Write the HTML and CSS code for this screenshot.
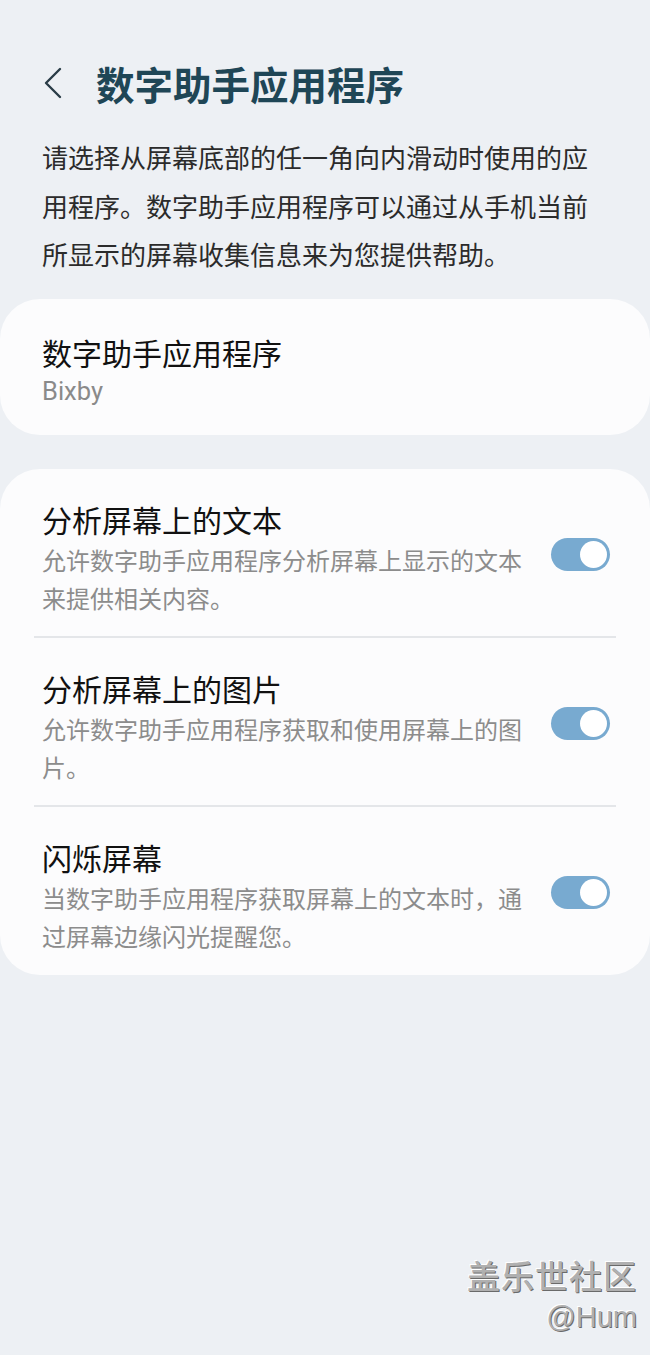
FILE: index.html
```html
<!DOCTYPE html>
<html lang="zh-CN">

<head>
    <meta charset="UTF-8">
    <meta name="viewport" content="width=device-width, initial-scale=1.0">
    <title>数字助手应用程序</title>
    <link rel="stylesheet" href="styles.css">
</head>

<body>

    <div class="header">
        <span class="back">
            <svg width="20" height="32" viewBox="0 0 20 32">
                <path d="M17 2 L3 16 L17 30" fill="none" stroke="#2a3d47" stroke-width="2.4" stroke-linecap="round" stroke-linejoin="round" />
            </svg>
        </span>
        <h1>数字助手应用程序</h1>
    </div>

    <p class="intro">请选择从屏幕底部的任一角向内滑动时使用的应用程序。数字助手应用程序可以通过从手机当前所显示的屏幕收集信息来为您提供帮助。</p>

    <div class="card single">
        <div class="itemTitle">数字助手应用程序</div>
        <div class="itemValue">Bixby</div>
    </div>

    <div class="card list">
        <div class="row">
            <div class="rowText">
                <div class="itemTitle">分析屏幕上的文本</div>
                <div class="itemDesc">允许数字助手应用程序分析屏幕上显示的文本来提供相关内容。</div>
            </div>
            <span class="toggle on"></span>
        </div>
        <div class="row">
            <div class="rowText">
                <div class="itemTitle">分析屏幕上的图片</div>
                <div class="itemDesc">允许数字助手应用程序获取和使用屏幕上的图片。</div>
            </div>
            <span class="toggle on"></span>
        </div>
        <div class="row">
            <div class="rowText">
                <div class="itemTitle">闪烁屏幕</div>
                <div class="itemDesc">当数字助手应用程序获取屏幕上的文本时，通过屏幕边缘闪光提醒您。</div>
            </div>
            <span class="toggle on"></span>
        </div>
    </div>

    <div class="watermark">
        <div class="wmName">盖乐世社区</div>
        <div class="wmUser">@Hum</div>
    </div>

</body>

</html>
```

FILE: styles.css
```css
body {
    margin: 0;
    min-height: 1355px;
    background-color: #edf0f4;
    font-family: "Noto Sans CJK SC", "Noto Sans", sans-serif;
    color: #111;
    position: relative;
}

.header {
    display: flex;
    align-items: center;
    padding: 59px 0 0 43px;
    height: 48px;
}

.back {
    display: flex;
    width: 53px;
}

h1 {
    margin: 0;
    font-size: 38.5px;
    line-height: 48px;
    font-weight: 700;
    color: #1f4656;
}

.intro {
    margin: 26px 0 0;
    padding: 0 42px;
    font-size: 26px;
    line-height: 48.5px;
    color: #2b2b2b;
}

.card {
    background-color: #fcfcfd;
    border-radius: 40px;
}

.single {
    margin-top: 20px;
    padding: 33px 42px 26px;
}

.itemTitle {
    font-size: 30px;
    line-height: 40px;
    color: #111;
}

.itemValue {
    font-size: 25.5px;
    line-height: 36px;
    margin-top: 1px;
    color: #8a8a8a;
    font-family: "Roboto", "Noto Sans CJK SC", sans-serif;
}

.list {
    margin-top: 34px;
    padding: 0 34px;
}

.row {
    display: flex;
    align-items: center;
    padding: 30px 6px 19px 8px;
    border-bottom: 2px solid #e4e6e9;
}

.row:last-child {
    border-bottom: none;
    padding-bottom: 20px;
}

.rowText {
    width: 480px;
}

.itemDesc {
    margin-top: 2px;
    font-size: 24px;
    line-height: 38px;
    color: #8c8c8c;
}

.toggle {
    margin-left: auto;
    margin-top: -6px;
    width: 59px;
    height: 33px;
    border-radius: 17px;
    background-color: #78aad0;
    position: relative;
}

.toggle::after {
    content: "";
    position: absolute;
    top: 3px;
    right: 3px;
    width: 27px;
    height: 27px;
    border-radius: 50%;
    background-color: #fff;
}

.watermark {
    position: absolute;
    right: 13px;
    bottom: 18px;
    text-align: right;
    color: #b0b0b0;
    text-shadow: 1px 1px 0 #6a6a6a, -1px -1px 0 #fff;
}

.wmName {
    font-size: 33px;
    line-height: 44px;
    font-weight: 500;
    letter-spacing: 1px;
}

.wmUser {
    font-family: "Liberation Sans", sans-serif;
    font-size: 29px;
    line-height: 40px;
}
```
